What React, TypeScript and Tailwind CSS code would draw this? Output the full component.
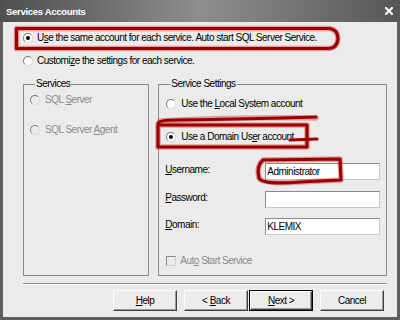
import React from "react";

function Radio({ checked = false, disabled = false }: { checked?: boolean; disabled?: boolean }) {
  return (
    <span
      className={`relative flex-none w-[10px] h-[10px] rounded-full border border-t-[#7a7a7a] border-l-[#7a7a7a] border-r-[#d8d8d8] border-b-[#d8d8d8] ${
        disabled ? "bg-[#ececec]" : "bg-white"
      }`}
    >
      {checked && (
        <span className="absolute left-[2px] top-[2px] w-[4px] h-[4px] rounded-full bg-black" />
      )}
    </span>
  );
}

function Btn({ children, isDefault = false }: { children: React.ReactNode; isDefault?: boolean }) {
  const inner = (
    <div className="w-full h-full flex items-center justify-center bg-[#ececec] border border-t-white border-l-white border-r-[#404040] border-b-[#404040] shadow-[inset_-1px_-1px_0_#9a9a9a]">
      {children}
    </div>
  );
  return isDefault ? (
    <div className="w-[64px] h-[21px] border border-black">{inner}</div>
  ) : (
    <div className="w-[64px] h-[21px]">{inner}</div>
  );
}

function Field({ label, value, mt }: { label: React.ReactNode; value?: string; mt: string }) {
  return (
    <div className={`flex items-start ${mt}`}>
      <div className="w-[100px] pt-[1px]">{label}</div>
      <div className="w-[115px] h-[17px] bg-white border border-t-[#8a8a8a] border-l-[#8a8a8a] border-r-[#c8c8c8] border-b-[#c8c8c8] px-[1px] flex items-center">
        {value}
      </div>
    </div>
  );
}

export default function App() {
  return (
    <div className="relative w-[400px] h-[320px] bg-[#5e5e5e] flex flex-col font-['Liberation_Sans',Arial,sans-serif] overflow-hidden">
      {/* Title bar */}
      <div className="h-[22px] flex-none flex items-center justify-between pl-[6px] pr-[7px] pt-[2px] bg-gradient-to-r from-[#4f4f4f] via-[#8e8e8e] to-[#575757]">
        <span className="text-white font-bold text-[9.5px] tracking-[-0.3px] leading-[12px]">
          Services Accounts
        </span>
        <svg width="8" height="8" viewBox="0 0 8 8" className="mb-[2px]">
          <path d="M1 1 L7 7 M7 1 L1 7" stroke="white" strokeWidth="2" strokeLinecap="square" />
        </svg>
      </div>

      {/* Body */}
      <div className="flex-1 mx-[3px] mb-[3px] bg-[#ebebeb] pl-[20px] pr-[10px] flex flex-col text-[10px] tracking-[-0.5px] leading-[12px] text-black">
        <div className="mt-[9px] h-[14px] flex items-center gap-[4px]">
          <Radio checked />
          <span>
            U<span className="underline">s</span>e the same account for each service. Auto start SQL Server Service.
          </span>
        </div>
        <div className="mt-[9px] h-[14px] flex items-center gap-[4px]">
          <Radio />
          <span>
            Customi<span className="underline">z</span>e the settings for each service.
          </span>
        </div>

        <div className="mt-[10px] flex h-[198px]">
          <fieldset className="w-[127px] h-full border border-[#8c8c8c] pl-[6px]">
            <legend className="ml-[5px] px-[1px] leading-[12px]">Services</legend>
            <div className="mt-[3px] h-[14px] flex items-center gap-[5px] text-[#8a8a8a]">
              <Radio disabled />
              <span>
                SQL <span className="underline">S</span>erver
              </span>
            </div>
            <div className="mt-[16px] h-[14px] flex items-center gap-[5px] text-[#8a8a8a]">
              <Radio disabled />
              <span>
                SQL Server <span className="underline">A</span>gent
              </span>
            </div>
          </fieldset>

          <fieldset className="ml-[9px] w-[230px] h-full border border-[#8c8c8c] pl-[6px]">
            <legend className="ml-[5px] px-[1px] leading-[12px]">Service Settings</legend>
            <div className="mt-[7px] ml-[1px] h-[14px] flex items-center gap-[5px]">
              <Radio />
              <span>
                Use the <span className="underline">L</span>ocal System account
              </span>
            </div>
            <div className="mt-[19px] ml-[1px] h-[14px] flex items-center gap-[5px]">
              <Radio checked />
              <span>
                Use a Domain Us<span className="underline">e</span>r account
              </span>
            </div>
            <Field
              mt="mt-[19px]"
              label={
                <span>
                  <span className="underline">U</span>sername:
                </span>
              }
              value="Administrator"
            />
            <Field
              mt="mt-[11px]"
              label={
                <span>
                  <span className="underline">P</span>assword:
                </span>
              }
            />
            <Field
              mt="mt-[10px]"
              label={
                <span>
                  <span className="underline">D</span>omain:
                </span>
              }
              value="KLEMIX"
            />
            <div className="mt-[19px] ml-[1px] h-[14px] flex items-center gap-[4px] text-[#8a8a8a]">
              <span className="w-[10px] h-[10px] flex-none bg-[#ececec] border border-t-[#8a8a8a] border-l-[#8a8a8a] border-r-[#cfcfcf] border-b-[#cfcfcf]" />
              <span>
                Aut<span className="underline">o</span> Start Service
              </span>
            </div>
          </fieldset>
        </div>

        <div className="mt-[7px] h-[2px] border-t border-t-[#8c8c8c] border-b border-b-white" />

        <div className="mt-[5px] flex justify-end pr-[3px]">
          <Btn>
            <span>
              <span className="underline">H</span>elp
            </span>
          </Btn>
          <div className="ml-[7px]">
            <Btn>
              <span>
                &lt; <span className="underline">B</span>ack
              </span>
            </Btn>
          </div>
          <div className="ml-[1px]">
            <Btn isDefault>
              <span>
                <span className="underline">N</span>ext &gt;
              </span>
            </Btn>
          </div>
          <div className="ml-[7px]">
            <Btn>
              <span>Cancel</span>
            </Btn>
          </div>
        </div>
      </div>

      {/* Red hand-drawn annotations */}
      <svg className="absolute inset-0 pointer-events-none" width="400" height="320" viewBox="0 0 400 320">
        <g fill="none" strokeLinecap="round" strokeLinejoin="round">
          <g stroke="#d43a3a" strokeOpacity="0.45" strokeWidth="5.5">
            <path d="M16.5 28.5 L330 28.5 Q338 30 338 39 Q337 48 329 48.5 L16.5 48.5 Z" />
            <path d="M158 125 L158 147 L307 147 L307 125 Z" />
            <path d="M160 121 Q240 117 316 118" />
            <path d="M263 160 L340 159 L341 180 L300 182 Q262 185 259 178 Q256 166 263 160 Z" />
          </g>
          <g stroke="#9a0000" strokeWidth="3.2">
            <path d="M16.5 28.5 L330 28.5 Q338 30 338 39 Q337 48 329 48.5 L16.5 48.5 Z" />
            <path d="M158 125 L158 147 L307 147 L307 125 Z" />
            <path d="M158 123 Q160 120 175 120 Q250 119 316 117" />
            <path d="M290 140 L317 139" />
            <path d="M263 160 L340 159 L341 180 L300 182 Q262 185 259 178 Q256 166 263 160 Z" />
          </g>
        </g>
      </svg>
    </div>
  );
}
